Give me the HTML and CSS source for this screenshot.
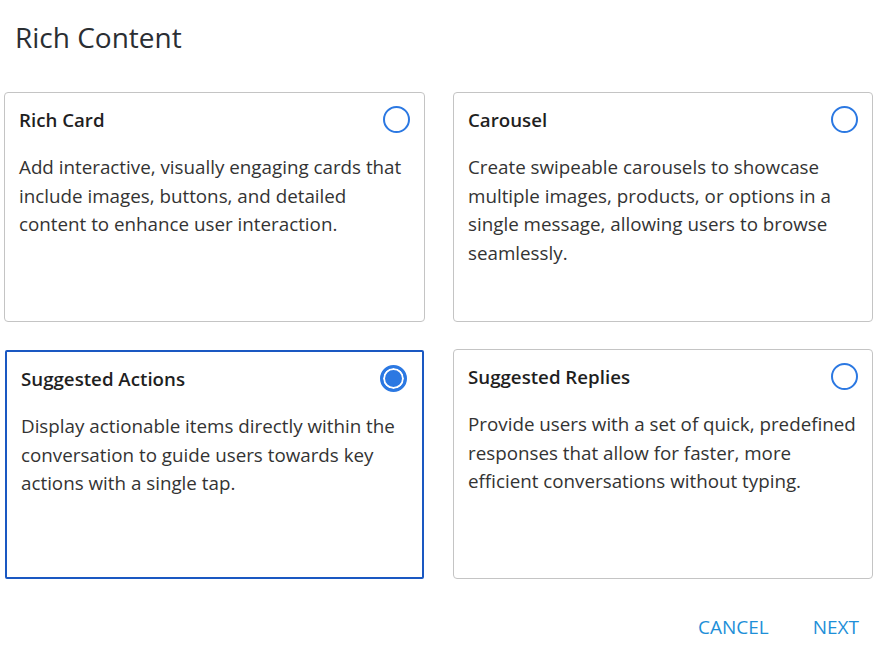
FILE: index.html
```html
<!DOCTYPE html>
<html>
<head>
<meta charset="utf-8">
<link rel="stylesheet" href="styles.css">
</head>
<body>
<div class="dialog">
  <h1 class="title">Rich Content</h1>
  <div class="grid">
    <div class="card">
      <div class="card-head">
        <span class="card-title">Rich Card</span>
        <span class="radio"></span>
      </div>
      <p class="card-text">Add interactive, visually engaging cards that include images, buttons, and detailed content to enhance user interaction.</p>
    </div>
    <div class="card">
      <div class="card-head">
        <span class="card-title">Carousel</span>
        <span class="radio"></span>
      </div>
      <p class="card-text">Create swipeable carousels to showcase multiple images, products, or options in a single message, allowing users to browse seamlessly.</p>
    </div>
    <div class="card selected">
      <div class="card-head">
        <span class="card-title">Suggested Actions</span>
        <span class="radio checked"></span>
      </div>
      <p class="card-text">Display actionable items directly within the conversation to guide users towards key actions with a single tap.</p>
    </div>
    <div class="card">
      <div class="card-head">
        <span class="card-title">Suggested Replies</span>
        <span class="radio"></span>
      </div>
      <p class="card-text">Provide users with a set of quick, predefined responses that allow for faster, more efficient conversations without typing.</p>
    </div>
  </div>
  <div class="actions">
    <button class="btn">CANCEL</button>
    <button class="btn">NEXT</button>
  </div>
</div>
</body>
</html>
```
FILE: styles.css
```css
* { box-sizing: border-box; }
html, body { margin: 0; padding: 0; background: #fff; }
body { font-family: "Open Sans", "Noto Sans", sans-serif; color: #2b2b2b; }
.dialog { width: 883px; padding: 0 10px 0 4px; }
.title {
  margin: 0;
  padding: 18px 0 0 11px;
  height: 92px;
  font-size: 28px;
  font-weight: 400;
  line-height: 38px;
  color: #2a2e33;
}
.grid {
  display: grid;
  grid-template-columns: 421px 420px;
  grid-auto-rows: 230px;
  column-gap: 28px;
  row-gap: 27px;
}
.card {
  border: 1px solid #c4c4c4;
  border-radius: 4px;
  padding: 8px 14px 0 14px;
}
.card.selected {
  border: 2px solid #1a58c2;
  border-radius: 2px;
  margin: 1px 1px 0 1px;
}
.card-head {
  display: flex;
  justify-content: space-between;
  align-items: center;
  height: 36px;
}
.card-title {
  font-size: 18.7px;
  font-weight: 600;
  color: #1f1f1f;
}
.radio {
  width: 27px;
  height: 27px;
  border: 2px solid #2b78e2;
  border-radius: 50%;
  margin-right: 0;
  flex: none;
}
.radio.checked {
  border-width: 3px;
  background: #2b78e2;
  box-shadow: inset 0 0 0 2px #fff;
  margin-right: 1px;
}
.card-text {
  margin: 16px 0 0 0;
  font-size: 18.8px;
  line-height: 28.6px;
  color: #333;
}
.actions {
  display: flex;
  justify-content: flex-end;
  gap: 44px;
  padding: 36px 14px 0 0;
}
.btn {
  border: 0;
  background: none;
  padding: 0;
  font-family: "Open Sans", "Noto Sans", sans-serif;
  font-size: 19px;
  line-height: 24px;
  color: #1e8fd8;
  cursor: pointer;
}
```
